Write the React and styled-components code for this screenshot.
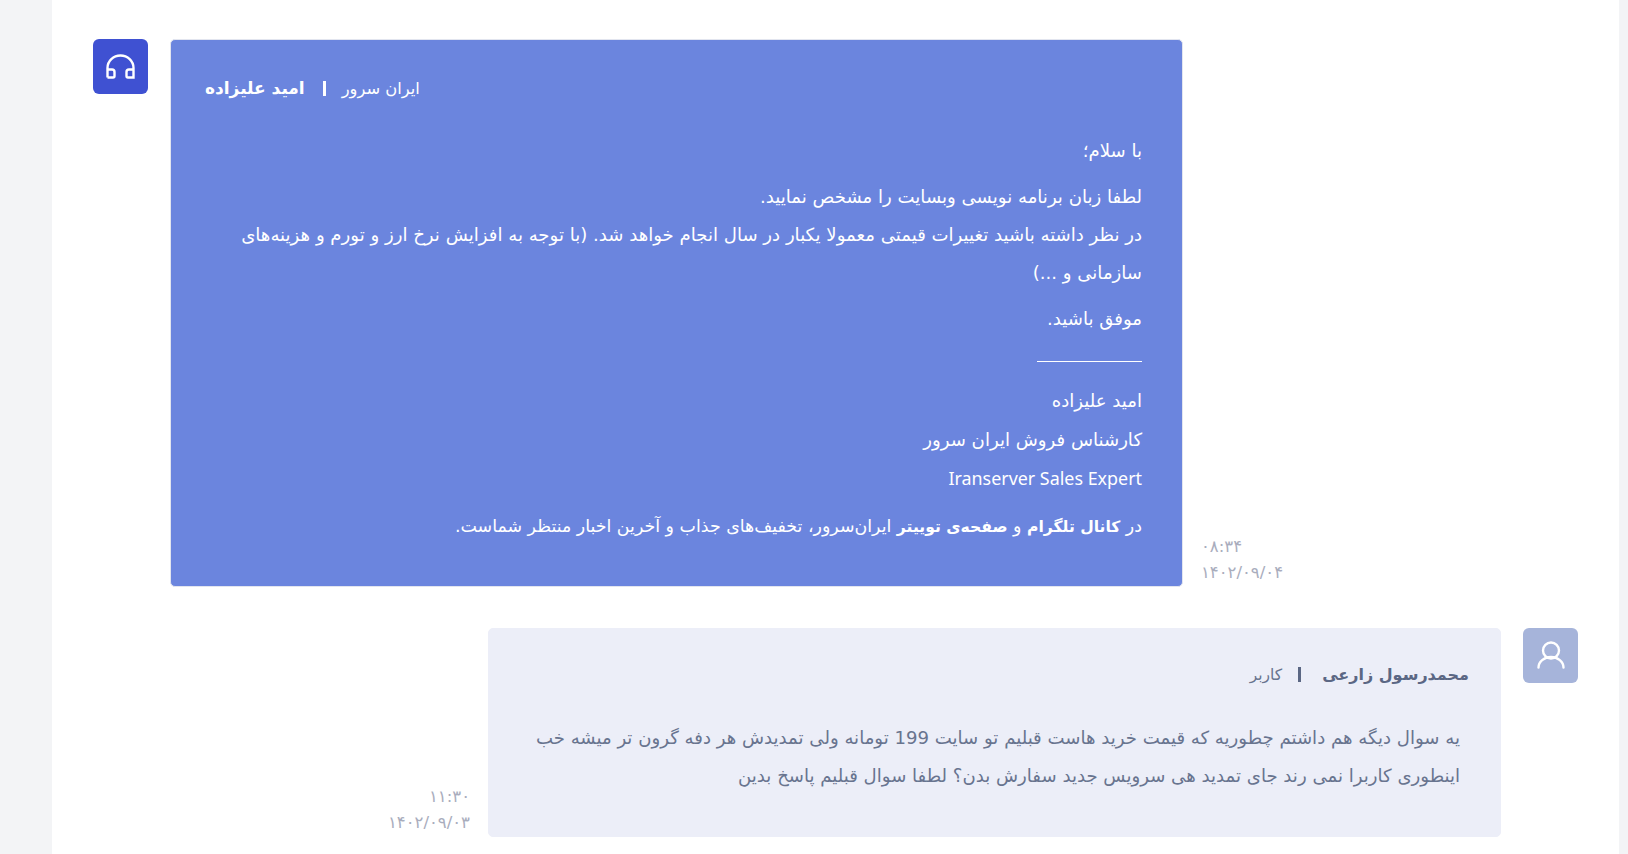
import React from 'react'
import styled, { createGlobalStyle } from 'styled-components'

const Global = createGlobalStyle`
html, body {
  margin: 0;
  padding: 0;
  height: 100%;
  overflow: hidden;
  background: #f3f4f6;
}
`

const Panel = styled.div`
margin: 0 9px 0 52px;
height: 854px;
background: #fff;
padding: 39px 41px 0;
box-sizing: border-box;
font-family: "DejaVu Sans", sans-serif;
`

const Row = styled.div`
display: flex;
flex-direction: ${p => (p.$user ? 'row-reverse' : 'row')};
align-items: stretch;
margin-bottom: 41px;
`

const Avatar = styled.div`
flex: none;
width: 55px;
height: 55px;
border-radius: 6px;
display: flex;
align-items: center;
justify-content: center;
background: ${p => (p.$user ? '#a6b4da' : '#3f51d2')};
color: #fff;
`

const Bubble = styled.div`
flex: none;
box-sizing: border-box;
width: 1013px;
margin: ${p => (p.$user ? '0 22px 0 0' : '0 0 0 22px')};
border: 1px solid ${p => (p.$user ? '#eceef8' : '#e2e5ef')};
border-radius: 5px;
padding: ${p => (p.$user ? '31px 33px 33px' : '33px 33px 32px')};
background: ${p => (p.$user ? '#eceef8' : '#6b85de')};
color: ${p => (p.$user ? '#68748f' : '#fff')};
`

const Head = styled.div`
display: flex;
flex-direction: ${p => (p.$user ? 'row-reverse' : 'row')};
align-items: center;
height: 30px;
margin: ${p => (p.$user ? '0 -2px 29px 0' : '0 0 29px 1px')};
`

const Name = styled.b`
direction: rtl;
font-size: ${p => (p.$user ? '16px' : '17px')};
font-weight: 700;
color: ${p => (p.$user ? '#5b6784' : '#fff')};
`

const Sep = styled.span`
width: 3px;
height: 15px;
margin: 0 ${p => (p.$user ? '21px' : '16px')} 0 ${p => (p.$user ? '16px' : '18px')};
background: ${p => (p.$user ? '#5b6784' : '#fff')};
`

const Role = styled.span`
direction: rtl;
font-size: ${p => (p.$user ? '15.5px' : '16.3px')};
`

const Body = styled.div`
direction: rtl;
padding-right: 7px;
font-size: 18.1px;
line-height: 38px;
`

const Para = styled.p`
margin: 0 0 8px;
line-height: ${p => (p.$loose ? '38.5px' : '38px')};
`

const Promo = styled(Para)`
font-size: 17.4px;

b {
  font-size: 15.6px;
}
`

const Latin = styled.span`
font-family: "Noto Sans", sans-serif;
font-size: 17.9px;
`

const Rule = styled.div`
width: 105px;
height: 1px;
margin: 23px 0 20px;
background: #fff;
`

const Stamp = styled.div`
flex: none;
align-self: flex-end;
direction: rtl;
display: flex;
flex-direction: column;
gap: 6px;
margin: ${p => (p.$user ? '0 18px 4px 0' : '0 0 4px 18px')};
align-items: ${p => (p.$user ? 'flex-start' : 'flex-end')};
font-size: 16.5px;
line-height: 20px;
color: #a9adbd;
`

const HeadphonesIcon = () => (
  <svg width="29" height="25" viewBox="0 0 29 25" fill="none" stroke="currentColor" strokeWidth="2.4">
    <path d="M1.5 23.5V14a13 12.5 0 0 1 26 0v9.5h-5.5a1.5 1.5 0 0 1-1.5-1.5v-4a2.5 2.5 0 0 1 2.5-2.5h4.5" />
    <path d="M1.5 23.5H7a1.5 1.5 0 0 0 1.5-1.5v-4A2.5 2.5 0 0 0 6 15.5H1.5" />
  </svg>
)

const UserIcon = () => (
  <svg width="28" height="28" viewBox="0 0 28 28" fill="none" stroke="currentColor" strokeWidth="2.4" strokeLinecap="round">
    <circle cx="14" cy="9.5" r="8" />
    <path d="M1.5 26.5a12.5 10.5 0 0 1 25 0" />
  </svg>
)

export default function App() {
  return (
    <>
      <Global />
      <Panel>
        <Row>
          <Avatar><HeadphonesIcon /></Avatar>
          <Bubble>
            <Head>
              <Name>امید علیزاده</Name>
              <Sep />
              <Role>ایران سرور</Role>
            </Head>
            <Body>
              <Para>با سلام؛</Para>
              <Para>
                لطفا زبان برنامه نویسی وبسایت را مشخص نمایید.<br />
                در نظر داشته باشید تغییرات قیمتی معمولا یکبار در سال انجام خواهد شد. (با توجه به افزایش نرخ ارز و تورم و هزینه‌های سازمانی و ...)
              </Para>
              <Para>موفق باشید.</Para>
              <Rule />
              <Para $loose>
                امید علیزاده<br />
                کارشناس فروش ایران سرور<br />
                <Latin>Iranserver Sales Expert</Latin>
              </Para>
              <Promo>
                در <b>کانال تلگرام</b> و <b>صفحه‌ی توییتر</b> ایران‌سرور، تخفیف‌های جذاب و آخرین اخبار منتظر شماست.
              </Promo>
            </Body>
          </Bubble>
          <Stamp>
            <span>۰۸:۳۴</span>
            <span>۱۴۰۲/۰۹/۰۴</span>
          </Stamp>
        </Row>
        <Row $user>
          <Avatar $user><UserIcon /></Avatar>
          <Bubble $user>
            <Head $user>
              <Name $user>محمدرسول زارعی</Name>
              <Sep $user />
              <Role $user>کاربر</Role>
            </Head>
            <Body>
              <Para>
                یه سوال دیگه هم داشتم چطوریه که قیمت خرید هاست قبلیم تو سایت 199 تومانه ولی تمدیدش هر دفه گرون تر میشه خب اینطوری کاربرا نمی رند جای تمدید هی سرویس جدید سفارش بدن؟ لطفا سوال قبلیم پاسخ بدین
              </Para>
            </Body>
          </Bubble>
          <Stamp $user>
            <span>۱۱:۳۰</span>
            <span>۱۴۰۲/۰۹/۰۳</span>
          </Stamp>
        </Row>
      </Panel>
    </>
  )
}
